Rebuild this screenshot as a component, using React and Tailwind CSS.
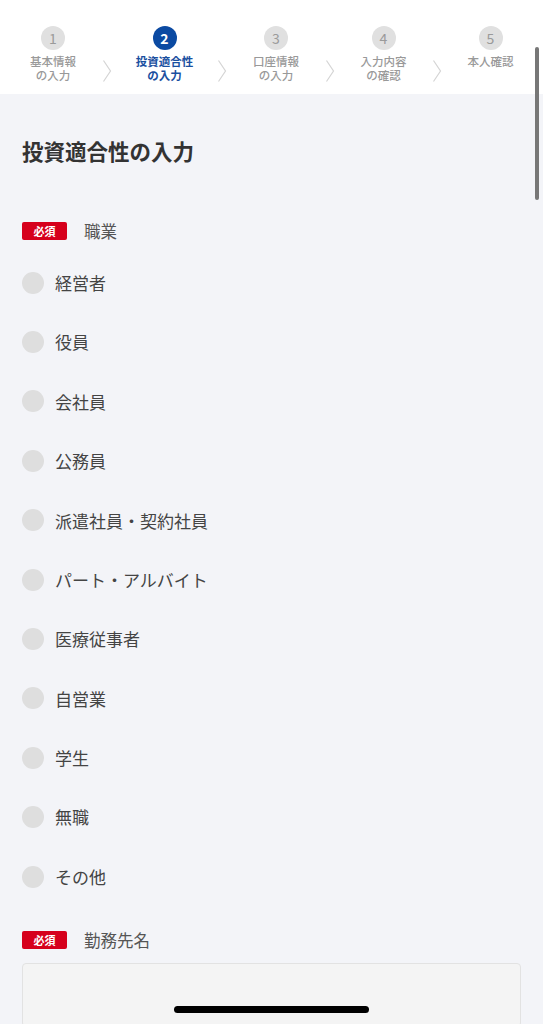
import React, { useState } from 'react';

const steps = [
  { no: 1, label: ['基本情報', 'の入力'], w: 'w-[98px]' },
  { no: 2, label: ['投資適合性', 'の入力'], w: 'w-[105px]' },
  { no: 3, label: ['口座情報', 'の入力'], w: 'w-[98px]' },
  { no: 4, label: ['入力内容', 'の確認'], w: 'w-[97px]' },
  { no: 5, label: ['本人確認'], w: 'flex-1' },
];

const jobs = [
  '経営者',
  '役員',
  '会社員',
  '公務員',
  '派遣社員・契約社員',
  'パート・アルバイト',
  '医療従事者',
  '自営業',
  '学生',
  '無職',
  'その他',
];

const Chevron = () => (
  <svg width="10" height="24" viewBox="0 0 10 24" className="shrink-0 mt-[33px]">
    <path d="M1.5 1.5 L8.5 12 L1.5 22.5" fill="none" stroke="#d4d4d4" strokeWidth="1.2" />
  </svg>
);

const Badge = () => (
  <span className="inline-flex items-center justify-center w-[45px] h-[18px] rounded-[2px] bg-[#d6001c] text-white text-[11px] font-bold leading-none">
    必須
  </span>
);

const App = () => {
  const [job, setJob] = useState(null);
  const [company, setCompany] = useState('');

  return (
    <div
      className="relative w-[543px] h-[1024px] overflow-hidden bg-[#f3f4f8]"
      style={{ fontFamily: '"Noto Sans CJK JP", "Noto Sans", sans-serif' }}
    >
      <header className="h-[94px] bg-white flex items-start pl-[4px] pr-[4px] pt-[26px]">
        {steps.map((s, i) => {
          const active = s.no === 2;
          return (
            <React.Fragment key={s.no}>
              {i > 0 && <Chevron />}
              <div className={`${s.w} shrink-0 flex flex-col items-center`}>
                <span
                  className={
                    active
                      ? 'w-[24px] h-[24px] rounded-full bg-[#0b4aa2] text-white text-[14px] font-bold flex items-center justify-center leading-none'
                      : 'w-[24px] h-[24px] rounded-full bg-[#e0e0e0] text-[#9a9a9a] text-[14px] flex items-center justify-center leading-none'
                  }
                >
                  {s.no}
                </span>
                <div
                  className={
                    active
                      ? 'mt-[4px] text-[11.5px] leading-[14px] font-bold text-[#1a4f9f] text-center'
                      : 'mt-[4px] text-[11.5px] leading-[14px] font-medium text-[#999] text-center'
                  }
                >
                  {s.label.map((l) => (
                    <div key={l}>{l}</div>
                  ))}
                </div>
              </div>
            </React.Fragment>
          );
        })}
      </header>

      <main className="px-[22px] pt-[42px]">
        <h1 className="text-[21.5px] leading-[30px] font-bold text-[#333]">投資適合性の入力</h1>

        <div className="mt-[56px] flex items-center gap-[17px] h-[18px]">
          <Badge />
          <span className="text-[16.5px] text-[#555]">職業</span>
        </div>

        <ul className="mt-[13px]">
          {jobs.map((j) => (
            <li key={j} className="h-[59.4px] flex items-center">
              <button
                type="button"
                onClick={() => setJob(j)}
                className="flex items-center gap-[11px] text-left"
              >
                <span
                  className={
                    job === j
                      ? 'w-[22px] h-[22px] rounded-full bg-[#0b4aa2] border-[6px] border-[#dcdcdc]'
                      : 'w-[22px] h-[22px] rounded-full bg-[#dedede]'
                  }
                />
                <span className="text-[17px] text-[#444]">{j}</span>
              </button>
            </li>
          ))}
        </ul>

        <div className="mt-[25px] flex items-center gap-[17px] h-[18px]">
          <Badge />
          <span className="text-[16.5px] text-[#555]">勤務先名</span>
        </div>

        <input
          value={company}
          onChange={(e) => setCompany(e.target.value)}
          className="mt-[14px] w-full h-[64px] rounded-[4px] bg-[#f4f4f4] border border-[#e2e2e2] px-3 text-[16px] outline-none"
        />
      </main>

      <div className="absolute right-[4px] top-[47px] w-[4px] h-[153px] rounded-full bg-[#777]" />
      <div className="absolute left-[174px] top-[1006px] w-[195px] h-[7px] rounded-full bg-black" />
    </div>
  );
};

export default App;
